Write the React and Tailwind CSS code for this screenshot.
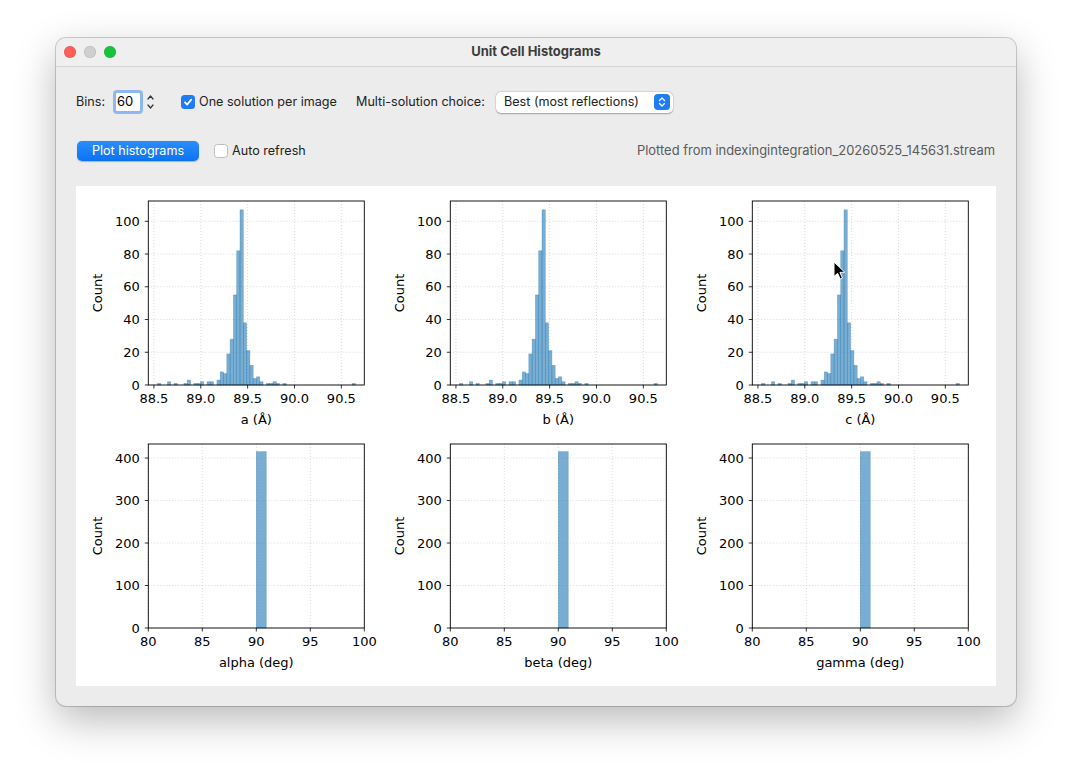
import React from "react";

const COUNTS = {0:1,3:2,5:1,8:1,9:3,11:1,12:1,13:2,15:2,16:2,18:3,19:8,20:7,21:19,22:28,23:55,24:82,25:107,26:38,27:21,28:12,29:4,30:5,31:2,33:1,34:1,35:2,36:1,38:1,59:1};
const START = 88.539;
const BW = (90.65 - 88.539) / 60;
const CELL_BARS = Object.entries(COUNTS).map(([i, c]) => [START + Number(i) * BW, START + (Number(i) + 1) * BW, c]);
const ANGLE_BARS = [[90.0, 90.92, 415]];

function Chart({ xlim, ylim, xticks, yticks, bars, xlabel, fmtX }) {
  const W = 302, H = 243, L = 72.3, T = 15, AW = 216, AH = 184;
  const sx = (v) => L + ((v - xlim[0]) / (xlim[1] - xlim[0])) * AW;
  const sy = (v) => T + AH - (v / ylim[1]) * AH;
  const font = "'DejaVu Sans', sans-serif";
  const fs = 13;
  return (
    <svg width={W} height={H} viewBox={`0 0 ${W} ${H}`} className="block">
      {xticks.map((t) => (
        <line key={"gx" + t} x1={sx(t)} x2={sx(t)} y1={T} y2={T + AH} stroke="#b0b0b0" strokeOpacity="0.6" strokeWidth="0.8" strokeDasharray="1 2" />
      ))}
      {yticks.map((t) => (
        <line key={"gy" + t} x1={L} x2={L + AW} y1={sy(t)} y2={sy(t)} stroke="#b0b0b0" strokeOpacity="0.6" strokeWidth="0.8" strokeDasharray="1 2" />
      ))}
      {bars.map(([a, b, c], i) => (
        <rect key={i} x={sx(a)} y={sy(c)} width={sx(b) - sx(a)} height={sy(0) - sy(c)} fill="#1f77b4" fillOpacity="0.6" stroke="#1f77b4" strokeOpacity="0.45" strokeWidth="0.6" />
      ))}
      <rect x={L} y={T} width={AW} height={AH} fill="none" stroke="#000" strokeWidth="0.9" />
      {xticks.map((t) => (
        <g key={"tx" + t}>
          <line x1={sx(t)} x2={sx(t)} y1={T + AH} y2={T + AH + 3.5} stroke="#000" strokeWidth="0.8" />
          <text x={sx(t)} y={T + AH + 17.5} textAnchor="middle" fontSize={fs} fontFamily={font} fill="#000">{fmtX(t)}</text>
        </g>
      ))}
      {yticks.map((t) => (
        <g key={"ty" + t}>
          <line x1={L - 3.5} x2={L} y1={sy(t)} y2={sy(t)} stroke="#000" strokeWidth="0.8" />
          <text x={L - 8.5} y={sy(t) + 4.7} textAnchor="end" fontSize={fs} fontFamily={font} fill="#000">{t}</text>
        </g>
      ))}
      <text x={L + AW / 2} y={T + AH + 38.5} textAnchor="middle" fontSize={fs} fontFamily={font} fill="#000">{xlabel}</text>
      <text x={L - 46} y={T + AH / 2} transform={`rotate(-90 ${L - 46} ${T + AH / 2})`} textAnchor="middle" fontSize={fs} fontFamily={font} fill="#000">Count</text>
    </svg>
  );
}

function CellChart({ label }) {
  return (
    <Chart
      xlim={[88.44, 90.745]}
      ylim={[0, 112.4]}
      xticks={[88.5, 89.0, 89.5, 90.0, 90.5]}
      yticks={[0, 20, 40, 60, 80, 100]}
      bars={CELL_BARS}
      xlabel={label}
      fmtX={(t) => t.toFixed(1)}
    />
  );
}

function AngleChart({ label }) {
  return (
    <Chart
      xlim={[80, 100]}
      ylim={[0, 433]}
      xticks={[80, 85, 90, 95, 100]}
      yticks={[0, 100, 200, 300, 400]}
      bars={ANGLE_BARS}
      xlabel={label}
      fmtX={(t) => String(t)}
    />
  );
}

function Check() {
  return (
    <svg width="10" height="10" viewBox="0 0 10 10">
      <path d="M2 5.3 L4.2 7.5 L8.2 2.6" fill="none" stroke="#fff" strokeWidth="1.8" strokeLinecap="round" strokeLinejoin="round" />
    </svg>
  );
}

export default function App() {
  return (
    <div className="min-h-[780px] w-[1072px] bg-white pl-[56px] pt-[38px]" style={{ fontFamily: "Inter, 'Noto Sans', sans-serif" }}>
      <div className="relative flex h-[668px] w-[960px] flex-col overflow-hidden rounded-[10px] bg-[#ececec] shadow-[0_14px_40px_rgba(0,0,0,0.28),0_0_0_1px_rgba(0,0,0,0.18)]">
        {/* title bar */}
        <div className="relative flex h-[29px] items-center border-b border-[#d6d6d6] bg-[#efefef] pl-[8px]">
          <div className="flex items-center gap-[8px]">
            <div className="h-[12px] w-[12px] rounded-full bg-[#ff5f57] shadow-[inset_0_0_0_0.5px_rgba(0,0,0,0.15)]" />
            <div className="h-[12px] w-[12px] rounded-full bg-[#cfcfcf] shadow-[inset_0_0_0_0.5px_rgba(0,0,0,0.15)]" />
            <div className="h-[12px] w-[12px] rounded-full bg-[#19c23b] shadow-[inset_0_0_0_0.5px_rgba(0,0,0,0.15)]" />
          </div>
          <div className="absolute inset-0 flex items-center justify-center text-[13px] font-bold text-[#3c3c3c]">Unit Cell Histograms</div>
        </div>

        <div className="flex flex-1 flex-col px-[20px]">
          {/* row 1 */}
          <div className="mt-[22px] flex h-[26px] items-center text-[12.6px] text-[#222]">
            <div className="flex w-[105px] items-center">
              <span>Bins:</span>
              <div className="ml-[8px] flex h-[24px] w-[30px] items-center rounded-[4px] border-[3px] border-[#90b8f0] bg-white pl-[1px] text-[13px] text-black">60</div>
              <div className="ml-[2px] flex h-[22px] w-[11px] flex-col items-center justify-center">
                <svg width="9" height="20" viewBox="0 0 9 20">
                  <path d="M2 7 L4.5 4 L7 7" fill="none" stroke="#333" strokeWidth="1.2" strokeLinecap="round" strokeLinejoin="round" />
                  <path d="M2 13 L4.5 16 L7 13" fill="none" stroke="#333" strokeWidth="1.2" strokeLinecap="round" strokeLinejoin="round" />
                </svg>
              </div>
            </div>
            <div className="flex w-[175px] items-center">
              <div className="flex h-[14px] w-[14px] items-center justify-center rounded-[3.5px] bg-[#1f7cf4]">
                <Check />
              </div>
              <span className="ml-[4px]">One solution per image</span>
            </div>
            <div className="w-[140px]">Multi-solution choice:</div>
            <div className="flex h-[21px] w-[177px] items-center justify-between rounded-[5px] bg-white pl-[8px] pr-[3px] shadow-[0_0.5px_1.5px_rgba(0,0,0,0.3),0_0_0_0.5px_rgba(0,0,0,0.08)]">
              <span>Best (most reflections)</span>
              <div className="flex h-[16px] w-[16px] items-center justify-center rounded-[4px] bg-[#1f7cf4]">
                <svg width="8" height="12" viewBox="0 0 8 12">
                  <path d="M1.5 4.5 L4 2 L6.5 4.5" fill="none" stroke="#fff" strokeWidth="1.3" strokeLinecap="round" strokeLinejoin="round" />
                  <path d="M1.5 7.5 L4 10 L6.5 7.5" fill="none" stroke="#fff" strokeWidth="1.3" strokeLinecap="round" strokeLinejoin="round" />
                </svg>
              </div>
            </div>
          </div>

          {/* row 2 */}
          <div className="mt-[25px] flex h-[22px] items-center text-[12.6px] text-[#222]">
            <div className="ml-[1px] flex h-[20px] w-[122px] items-center justify-center rounded-[5px] bg-gradient-to-b from-[#2a8dfc] to-[#0a73f0] text-white shadow-[0_0.5px_1px_rgba(0,0,0,0.25)]">Plot histograms</div>
            <div className="ml-[15px] h-[14px] w-[14px] rounded-[3.5px] border border-[#bdbdbd] bg-white" />
            <span className="ml-[4px]">Auto refresh</span>
            <span className="ml-auto pr-[1px] text-[12.95px] text-[#5a5a5a]">Plotted from indexingintegration_20260525_145631.stream</span>
          </div>

          {/* figure panel */}
          <div className="relative mt-[24px] h-[500px] bg-white">
            <div className="grid grid-cols-[302px_302px_302px] grid-rows-[243px_243px]">
              <CellChart label="a (Å)" />
              <CellChart label="b (Å)" />
              <CellChart label="c (Å)" />
              <AngleChart label="alpha (deg)" />
              <AngleChart label="beta (deg)" />
              <AngleChart label="gamma (deg)" />
            </div>
            <svg className="absolute left-[757px] top-[75px]" width="14" height="20" viewBox="0 0 14 20">
              <path d="M1 1 L1 15.5 L4.6 12.3 L7.2 18 L9.4 17 L6.9 11.4 L11.8 11.2 Z" fill="#000" stroke="#fff" strokeWidth="1" strokeLinejoin="round" />
            </svg>
          </div>
        </div>
      </div>
    </div>
  );
}
